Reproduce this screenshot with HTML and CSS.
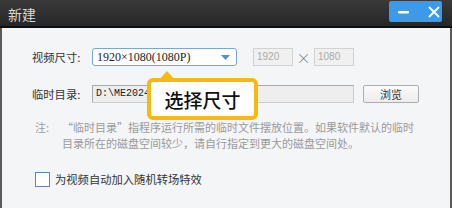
FILE: index.html
```html
<!DOCTYPE html>
<html>
<head>
<meta charset="utf-8">
<link rel="stylesheet" href="styles.css">
</head>
<body>
<div class="window">
  <div class="titlebar">
    <span class="title">新建</span>
    <div class="winbtns">
      <svg class="ico-min" width="12" height="4" viewBox="0 0 12 4"><rect x="0" y="1" width="11" height="2.4" rx="1" fill="#fff"/></svg>
      <svg class="ico-close" width="12" height="12" viewBox="0 0 12 12"><path d="M1.5 1.5 L10.5 10.5 M10.5 1.5 L1.5 10.5" stroke="#fff" stroke-width="1.8" stroke-linecap="round"/></svg>
    </div>
  </div>
  <div class="content">
    <div class="row row1">
      <span class="label">视频尺寸:</span>
      <div class="select">
        <span class="select-text">1920×1080(1080P)</span>
        <svg class="arrow" width="9" height="5" viewBox="0 0 9 5"><path d="M0 0 L9 0 L4.5 5 Z" fill="#4a8fd6"/></svg>
      </div>
      <div class="numbox">1920</div>
      <span class="times">×</span>
      <div class="numbox">1080</div>
    </div>
    <div class="row row2">
      <span class="label">临时目录:</span>
      <div class="pathbox">D:\ME2024</div>
      <div class="browse">浏览</div>
    </div>
    <div class="note">
      <span class="note-head">注:</span>
      <span class="note-body">“临时目录”指程序运行所需的临时文件摆放位置。如果软件默认的临时目录所在的磁盘空间较少，请自行指定到更大的磁盘空间处。</span>
    </div>
    <div class="check">
      <span class="box"></span>
      <span class="check-label">为视频自动加入随机转场特效</span>
    </div>
  </div>
  <div class="tip">
    <svg class="tip-arrow" width="16" height="10" viewBox="0 0 16 10"><path d="M0 10 L8 1 L16 10 Z" fill="#f6b90f"/></svg>
    <span class="tip-text">选择尺寸</span>
  </div>
</div>
</body>
</html>
```

FILE: styles.css
```css
html, body {
  margin: 0;
  padding: 0;
}
body {
  width: 452px;
  height: 208px;
  overflow: hidden;
  font-family: "Noto Sans CJK SC", "Noto Sans", sans-serif;
}
.window {
  position: relative;
  width: 452px;
  height: 208px;
  box-sizing: border-box;
  background: #f4f5f7;
  border-left: 2px solid #5a5a5a;
  border-right: 2px solid #5a5a5a;
}
.titlebar {
  height: 26px;
  margin: 0 -2px;
  background: linear-gradient(#3a3a3a, #262626);
  border-bottom: 2px solid #0e0e0e;
  display: flex;
  align-items: center;
  justify-content: space-between;
}
.title {
  margin-left: 8px;
  margin-top: 1px;
  color: #d8d8d8;
  font-size: 14px;
  line-height: 14px;
}
.winbtns {
  align-self: flex-start;
  margin-top: 1px;
  margin-right: 10px;
  width: 53px;
  height: 21px;
  border-radius: 2px;
  background: #3d9ae8;
  display: flex;
  align-items: center;
  box-sizing: border-box;
  padding-left: 9px;
  gap: 18px;
}
.content {
  padding: 20px 0 0 30px;
  display: flex;
  flex-direction: column;
}
.row {
  display: flex;
  align-items: center;
  height: 18px;
}
.label {
  width: 60px;
  font-size: 11.3px;
  color: #333;
  line-height: 18px;
}
.select {
  width: 145px;
  height: 18px;
  box-sizing: border-box;
  border: 1px solid #7aa5d4;
  border-radius: 3px;
  background: #fff;
  display: flex;
  align-items: center;
  justify-content: space-between;
  padding: 0 6px 0 4px;
}
.select-text {
  font-family: "Liberation Serif", serif;
  font-size: 12px;
  color: #222;
  line-height: 16px;
}
.numbox {
  width: 40px;
  height: 18px;
  box-sizing: border-box;
  border: 1px solid #d2d2d2;
  background: #f0f0f0;
  color: #aaa;
  font-family: "Liberation Sans", sans-serif;
  font-size: 10px;
  line-height: 16px;
  padding-left: 3px;
}
.row1 .select + .numbox {
  margin-left: 16px;
}
.times {
  width: 21px;
  text-align: center;
  color: #777;
  font-family: "Noto Sans CJK SC", sans-serif;
  font-weight: 300;
  font-size: 14px;
  line-height: 18px;
}
.row2 {
  margin-top: 19px;
}
.pathbox {
  width: 262px;
  height: 18px;
  box-sizing: border-box;
  border: 1px solid #aaa;
  border-right-color: #ccc;
  border-bottom-color: #ccc;
  background: #eeeeee;
  font-family: "Liberation Mono", monospace;
  font-size: 10px;
  line-height: 16px;
  color: #222;
  padding-left: 3px;
}
.browse {
  margin-left: 9px;
  width: 56px;
  height: 18px;
  box-sizing: border-box;
  border: 1px solid #adadad;
  border-radius: 2px;
  background: linear-gradient(#fbfbfb, #ececec);
  font-size: 11px;
  color: #333;
  text-align: center;
  line-height: 16px;
}
.note {
  margin-top: 16px;
  display: flex;
  font-size: 11px;
  line-height: 16px;
  color: #9a9a9a;
}
.note-head {
  width: 30px;
  flex: none;
  padding-left: 3px;
  box-sizing: border-box;
}
.note-body {
  width: 362px;
}
.check {
  margin-top: 21px;
  margin-left: 3px;
  display: flex;
  align-items: center;
  gap: 5px;
}
.box {
  width: 15px;
  height: 15px;
  box-sizing: border-box;
  border: 1px solid #5d86b5;
  background: #fff;
}
.check-label {
  font-size: 11.3px;
  color: #333;
  line-height: 15px;
}
.tip {
  position: absolute;
  left: 145px;
  top: 78px;
  width: 111px;
  height: 42px;
  box-sizing: border-box;
  border: 4px solid #f6b90f;
  border-radius: 6px;
  background: #fff;
  display: flex;
  align-items: center;
  justify-content: center;
}
.tip-arrow {
  position: absolute;
  left: 8px;
  top: -12px;
}
.tip-text {
  font-size: 19px;
  font-weight: 500;
  color: #111;
  line-height: 20px;
  margin-top: 2px;
}
```
